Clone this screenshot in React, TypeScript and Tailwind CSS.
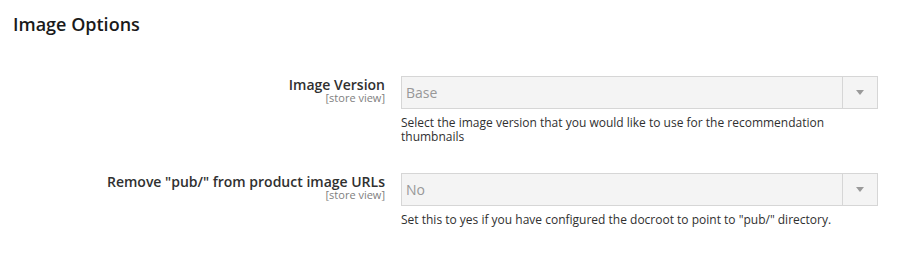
import React from "react";

const font = { fontFamily: '"Open Sans", "Liberation Sans", sans-serif' };

function Select({ value }: { value: string }) {
  return (
    <div className="flex h-[33px] w-[477px] border border-[#d6d6d6] bg-[#f4f4f4]">
      <div className="flex flex-1 items-center pl-[4px] text-[14px] text-[#989898]">{value}</div>
      <div className="flex w-[35px] items-center justify-center border-l border-[#d6d6d6]">
        <svg width="8" height="5" viewBox="0 0 8 5">
          <path d="M0 0 H8 L4 5 Z" fill="#9a9a9a" />
        </svg>
      </div>
    </div>
  );
}

function Row({ label, value, note }: { label: string; value: string; note: string }) {
  return (
    <div className="flex items-start gap-[16px]">
      <div className="flex w-[372px] flex-col items-end pt-[2px] text-right">
        <div className="text-[14px] leading-[14px] font-semibold text-[#303030]">{label}</div>
        <div className="text-[11px] leading-[11px] text-[#808080]">[store view]</div>
      </div>
      <div className="flex w-[477px] flex-col">
        <Select value={value} />
        <div className="mt-[7px] text-[12px] leading-[14.4px] text-[#303030]">{note}</div>
      </div>
    </div>
  );
}

export default function App() {
  return (
    <div className="h-[257px] w-[906px] bg-white px-[13px] pt-[15px]" style={font}>
      <h2 className="text-[18px] leading-[18px] font-semibold text-[#1a1a1a]">Image Options</h2>
      <div className="mt-[43px] flex flex-col gap-[28px]">
        <Row
          label="Image Version"
          value="Base"
          note="Select the image version that you would like to use for the recommendation thumbnails"
        />
        <Row
          label={'Remove "pub/" from product image URLs'}
          value="No"
          note={'Set this to yes if you have configured the docroot to point to "pub/" directory.'}
        />
      </div>
    </div>
  );
}
